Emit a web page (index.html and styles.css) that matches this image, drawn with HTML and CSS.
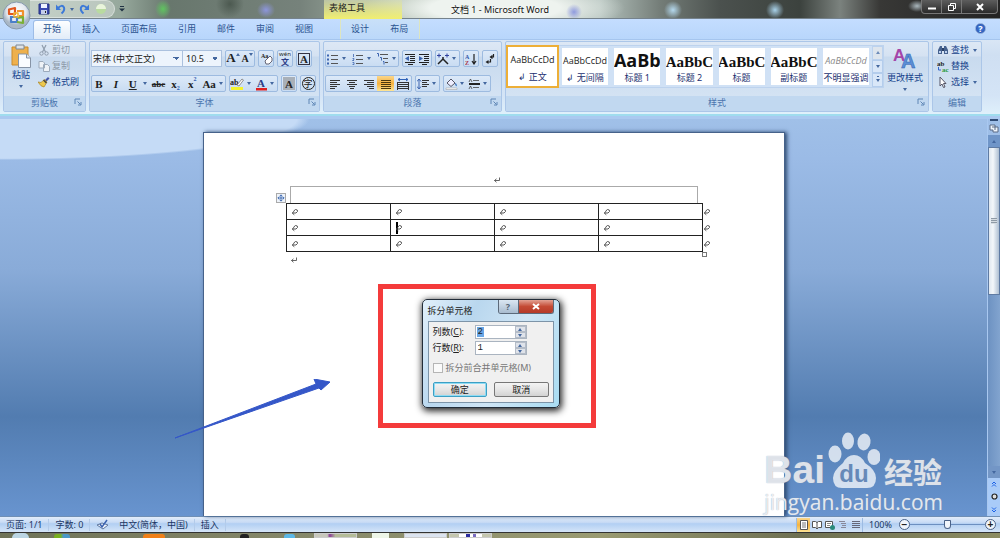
FILE: index.html
```html
<!DOCTYPE html>
<html lang="zh-CN">
<head>
<meta charset="utf-8">
<title>文档 1 - Microsoft Word</title>
<link rel="stylesheet" href="styles.css">
</head>
<body>
<svg class="sprite" aria-hidden="true">
  <symbol id="cellmark" viewBox="0 0 8 8"><path d="M2.500 3.200 4.500 1.500q2.500 0 2 2L5 5H1.500M3.300 3.200 1.200 5l2.100 1.800" fill="none" stroke="#444" stroke-width=".9"/></symbol>
  <symbol id="paramark" viewBox="0 0 8 8"><path d="M6.500 1.500V4.500H1.500M3.500 2.800 1.500 4.500l2 1.800" fill="none" stroke="#555" stroke-width=".9"/></symbol>
  <symbol id="launch" viewBox="0 0 8 8"><path d="M1 6V1h5M3.500 3.500l3 3M7 4v3H4" fill="none" stroke="#5f86b5"/></symbol>
  <symbol id="lines" viewBox="0 0 12 12"><path d="M1 2.500h10M1 4.500h7M1 6.500h10M1 8.500h7M1 10.500h5" stroke="#333"/></symbol>
</svg>

<header class="titlebar">
  <div class="quick">
    <button aria-label="保存"><svg width="12" height="12" viewBox="0 0 12 12"><path d="M1 1h10v10H1z" fill="#3a49b0" stroke="#22307f"/><path d="M3 1h6v4H3z" fill="#eef3ff"/><path d="M3 7h6v4H3z" fill="#c4cdea"/><path d="M7 8h1v2H7z" fill="#222"/></svg></button>
    <button aria-label="撤消"><svg width="12" height="12" viewBox="0 0 12 12"><path d="M3 5q4-4 6-.500 1 3-2.500 6" fill="none" stroke="#3c79d8" stroke-width="2"/><path d="M1 1.500V7h5z" fill="#3c79d8"/></svg></button>
    <i class="arr"></i>
    <button aria-label="恢复"><svg width="12" height="12" viewBox="0 0 12 12"><path d="M9 5Q5 1 3 4.500q-1 3 2.500 6" fill="none" stroke="#3c79d8" stroke-width="2"/><path d="M11 1.500V7H6z" fill="#3c79d8"/></svg></button>
    <button aria-label="主题"><svg width="12" height="12" viewBox="0 0 12 12"><circle cx="6" cy="6" r="5" fill="#b9dba0"/><path d="M1 6a5 5 0 0 1 10 0z" fill="#e9f4dc"/></svg></button>
  </div>
  <button class="more" aria-label="自定义快速访问工具栏"><svg width="6" height="6" viewBox="0 0 6 6"><path d="M1 .500h4" stroke="#234"/><path d="M0 2.500h6L3 5.500z" fill="#234"/></svg></button>
  <div class="context-title">表格工具</div>
  <h1 class="title">文档 1 - Microsoft Word</h1>
  <div class="winbuttons">
    <button aria-label="最小化"><svg width="10" height="10" viewBox="0 0 10 10"><path d="M1 6.500h8" stroke="#fff" stroke-width="2"/></svg></button>
    <button aria-label="还原"><svg width="10" height="10" viewBox="0 0 10 10"><path d="M3.500 3V1.500h5v5H7M1.500 3.500h5v5h-5z" fill="none" stroke="#fff"/></svg></button>
    <button class="close" aria-label="关闭"><svg width="10" height="10" viewBox="0 0 10 10"><path d="m2 2 6 6M8 2 2 8" stroke="#fff" stroke-width="2"/></svg></button>
  </div>
</header>

<button class="orb" aria-label="Office 按钮"><svg width="29" height="29" viewBox="0 0 29 29"><defs><radialGradient id="og" cx=".5" cy=".35"><stop offset="0" stop-color="#fff"/><stop offset=".7" stop-color="#e4e9ef"/><stop offset="1" stop-color="#a9b7c6"/></radialGradient></defs><circle cx="14.500" cy="14.500" r="13.500" fill="url(#og)" stroke="#8799ad"/><g fill="none" stroke-width="2.200" stroke-linejoin="round"><path d="M7 8.500 13 7v6H7z" stroke="#e0571e"/><path d="M15 10h6v5h-4" stroke="#f0912e"/><path d="M9 15v6h6v-5H9" stroke="#4a7fc9"/><path d="m16 17 5-1v6l-6-1" stroke="#7ab034"/><path d="M12 12h4v4h-4z" stroke="#efb52e" stroke-width="1.500"/></g></svg></button>

<nav class="tabs">
  <a class="tab on" href="#home">开始</a><a class="tab" href="#insert">插入</a><a class="tab" href="#layout">页面布局</a><a class="tab" href="#ref">引用</a><a class="tab" href="#mail">邮件</a><a class="tab" href="#review">审阅</a><a class="tab" href="#view">视图</a>
  <div class="context"><a class="tab" href="#design">设计</a><a class="tab" href="#tlayout">布局</a></div>
  <button class="help" aria-label="帮助">?</button>
</nav>

<section class="ribbon">
  <div class="group clip">
    <div class="body">
      <button class="big"><svg width="22" height="24" viewBox="0 0 22 24"><path d="M2 3h16v18H2z" fill="#eeb04c" stroke="#c98a2c"/><path d="M6 1h8v4H6z" fill="#dfe3e8" stroke="#7c8793"/><path d="M8.500 10h8l4 4v9.500h-12z" fill="#fafcff" stroke="#8794a6"/><path d="M16.500 10v4h4" fill="#dde6f2" stroke="#8794a6"/></svg><span>粘贴</span><i class="arr"></i></button>
      <div class="stack">
        <button class="row off"><svg width="12" height="12" viewBox="0 0 12 12"><path d="m4 1 3.500 7M8 1 4.500 8" stroke="#8f9cad" stroke-width="1.200"/><circle cx="3.500" cy="9.500" r="1.700" fill="none" stroke="#8f9cad"/><circle cx="8.500" cy="9.500" r="1.700" fill="none" stroke="#8f9cad"/></svg>剪切</button>
        <button class="row off"><svg width="12" height="12" viewBox="0 0 12 12"><path d="M1 1.500h4l1.500 1.500v5H1zM5.500 4.500h4l2 2v5h-6z" fill="#eef2f7" stroke="#9caabb"/></svg>复制</button>
        <button class="row"><svg width="12" height="12" viewBox="0 0 12 12"><path d="m7 4 3-3 1.500 1.500-3 3z" fill="#4656a8"/><path d="m0 6 3 .500L6.500 3.500 9 6 6 11q-3 0-6-5z" fill="#edc84c" stroke="#a98526" stroke-width=".7"/><path d="m5.500 4 3 3" stroke="#444" stroke-width="1.500"/></svg>格式刷</button>
      </div>
    </div>
    <h2>剪贴板<button class="launch" aria-label="剪贴板选项"><svg width="8" height="8"><use href="#launch"/></svg></button></h2>
  </div>

  <div class="group font">
    <div class="body rows">
      <div class="line">
        <div class="combos"><select class="combo face" aria-label="字体"><option>宋体 (中文正文)</option></select><select class="combo size" aria-label="字号"><option>10.5</option></select></div>
        <div class="set"><button class="serif grow" aria-label="增大字体">A<i class="arr up"></i></button><button class="serif small" aria-label="缩小字体">A<i class="arr"></i></button></div>
        <div class="set"><button aria-label="清除格式"><svg width="13" height="13" viewBox="0 0 13 13"><text x="1" y="6" font-size="6" class="ic">Aa</text><path d="m5 9 5-5 2 2v3l-3 3H6z" fill="#fff" stroke="#667"/></svg></button></div>
        <div class="set"><button class="wen" aria-label="拼音指南"><small>wén</small><b>文</b></button></div>
        <div class="set"><button class="serif boxed" aria-label="字符边框">A</button></div>
      </div>
      <div class="line">
        <div class="set spread">
          <button class="serif">B</button><button class="serif ital">I</button><button class="serif under">U</button><i class="arr"></i><button class="serif strike">abc</button><button class="serif">x<sub>2</sub></button><button class="serif">x<sup>2</sup></button><button class="serif aa">Aa</button><i class="arr"></i>
        </div>
        <div class="set"><button aria-label="突出显示"><svg width="15" height="14" viewBox="0 0 15 14"><text x="0" y="8" font-size="8" class="ic">ab</text><path d="m7 8 5-6 1.500 1-4.500 6z" fill="#fff" stroke="#777" stroke-width=".8"/><path d="M1 10h12v3H1z" fill="#f4f32c"/></svg></button><i class="arr"></i><button aria-label="字体颜色"><svg width="13" height="14" viewBox="0 0 13 14"><text x="2" y="10" font-size="11" class="ic navy">A</text><path d="M1 11h11v2.500H1z" fill="#e02020"/></svg></button><i class="arr"></i></div>
        <div class="set"><button class="serif shaded" aria-label="字符底纹">A</button></div>
        <div class="set"><button class="ring" aria-label="带圈字符"><span>字</span></button></div>
      </div>
    </div>
    <h2>字体<button class="launch" aria-label="字体选项"><svg width="8" height="8"><use href="#launch"/></svg></button></h2>
  </div>

  <div class="group para">
    <div class="body rows">
      <div class="line">
        <div class="set spread first"><button aria-label="项目符号"><svg width="12" height="12" viewBox="0 0 12 12"><path d="M4 2.500h7M4 6.500h7M4 10.500h7" stroke="#555"/><path d="M0 1.500h2v2H0zM0 5.500h2v2H0zM0 9.500h2v2H0z" fill="#3d65b0"/></svg></button><i class="arr"></i><button aria-label="编号"><svg width="12" height="12" viewBox="0 0 12 12"><path d="M4 2.500h7M4 6.500h7M4 10.500h7" stroke="#555"/><path d="M1.500 1v3M.500 5.500h1.500v1L.500 7.500H2M.500 9.500H2v2H.500" fill="none" stroke="#3d65b0" stroke-width=".8"/></svg></button><i class="arr"></i><button aria-label="多级列表"><svg width="12" height="12" viewBox="0 0 12 12"><path d="M3 1.500h8M6 5.500h5M8 9.500h3" stroke="#555"/><path d="M0 .500h1.500v3M3 4.500h1.500v3M6 8.500h1v3" fill="none" stroke="#3d65b0"/></svg></button><i class="arr"></i></div>
        <div class="set"><button aria-label="减少缩进"><svg width="12" height="12" viewBox="0 0 12 12"><path d="M1 1.500h10M6 3.500h5M6 5.500h5M6 7.500h5M1 9.500h10M4 11.500h5" stroke="#222"/><path d="M5 3v5L1 5.500z" fill="#3d65b0"/></svg></button><button aria-label="增加缩进"><svg width="12" height="12" viewBox="0 0 12 12"><path d="M1 1.500h10M6 3.500h5M6 5.500h5M6 7.500h5M1 9.500h10M4 11.500h5" stroke="#222"/><path d="M1 3v5l4-2.500z" fill="#3d65b0"/></svg></button></div>
        <div class="set"><button aria-label="中文版式"><svg width="12" height="12" viewBox="0 0 12 12"><path d="M6 4v2L1 11M6 6l5 5" stroke="#222" stroke-width="1.500" fill="none"/><path d="M0 2.500h4M2 .500v4M8 2.500h4M10 .500v4" stroke="#3042a0"/></svg></button><i class="arr"></i></div>
        <div class="set"><button aria-label="排序"><svg width="12" height="12" viewBox="0 0 12 12"><text x="0" y="6" font-size="6" class="ic blue">A</text><text x="0" y="12" font-size="6" class="ic red">Z</text><path d="M9 1v9M7 8l2 3 2-3" stroke="#222" fill="none" stroke-width="1.200"/></svg></button></div>
        <div class="set"><button aria-label="显示编辑标记"><svg width="12" height="12" viewBox="0 0 12 12"><path d="M9.500 1v3H6.500M8.500 2.500 6.500 4l2 1.500M6.500 6v3H4" fill="none" stroke="#222" stroke-width="1.200"/><path d="M1.500 9 4.500 7v4z" fill="#222"/></svg></button></div>
      </div>
      <div class="line">
        <div class="set"><button aria-label="左对齐"><svg width="12" height="12"><use href="#lines"/></svg></button><button aria-label="居中"><svg width="12" height="12" viewBox="0 0 12 12"><path d="M1 2.500h10M3 4.500h6M1 6.500h10M3 8.500h6M4 10.500h4" stroke="#333"/></svg></button><button aria-label="右对齐"><svg width="12" height="12" viewBox="0 0 12 12"><path d="M1 2.500h10M4 4.500h7M1 6.500h10M4 8.500h7M6 10.500h5" stroke="#333"/></svg></button><button class="lit" aria-label="两端对齐"><svg width="12" height="12" viewBox="0 0 12 12"><path d="M1 2.500h10M1 4.500h10M1 6.500h10M1 8.500h10M1 10.500h10" stroke="#4c3a10"/></svg></button><button aria-label="分散对齐"><svg width="12" height="12" viewBox="0 0 12 12"><path d="M1 4.500h10M1 6.500h10M1 8.500h10M1 10.500h10M.500 4v8M11.500 4v8" stroke="#333"/><path d="M1 1.500h10M3 0 1 1.500 3 3M9 0l2 1.500L9 3" stroke="#2f62b8" fill="none"/></svg></button></div>
        <div class="set"><button aria-label="行距"><svg width="12" height="12" viewBox="0 0 12 12"><path d="M5 2.500h7M5 4.500h5M5 6.500h7M5 8.500h5" stroke="#333"/><path d="M2 1v10M0 3.500 2 1l2 2.500M0 8.500 2 11l2-2.500" stroke="#3d65b0" fill="none"/></svg></button><i class="arr"></i></div>
        <div class="set"><button aria-label="底纹"><svg width="13" height="13" viewBox="0 0 13 13"><path d="m2 6 4-4 4 4-4 3.500z" fill="#eef" stroke="#556"/><path d="M10 6q2.500 1 1.500 3.500Q10 9 10 6z" fill="#2d6cc0"/><path d="M1 11h11v1.500H1z" fill="#fff" stroke="#999" stroke-width=".5"/></svg></button><i class="arr"></i><button aria-label="边框"><svg width="12" height="12" viewBox="0 0 12 12"><path d="M1 6h11" stroke="#222" stroke-width="2"/><path d="M5 2.500h6M5 9.500h6M1 4l1.500-3L4 4M1 11l1.500-3L4 11" stroke="#444" fill="none" stroke-width=".8"/></svg></button><i class="arr"></i></div>
      </div>
    </div>
    <h2>段落<button class="launch" aria-label="段落选项"><svg width="8" height="8"><use href="#launch"/></svg></button></h2>
  </div>

  <div class="group styles">
    <div class="body">
      <div class="gallery">
        <button class="tile on"><span class="sample">AaBbCcDd</span><span>↲ 正文</span></button>
        <button class="tile"><span class="sample">AaBbCcDd</span><span>↲ 无间隔</span></button>
        <button class="tile"><span class="sample h1">AaBb</span><span>标题 1</span></button>
        <button class="tile"><span class="sample h2">AaBbC</span><span>标题 2</span></button>
        <button class="tile"><span class="sample h2">AaBbC</span><span>标题</span></button>
        <button class="tile"><span class="sample h2">AaBbC</span><span>副标题</span></button>
        <button class="tile"><span class="sample faint">AaBbCcDd</span><span>不明显强调</span></button>
        <div class="scroll"><button class="dim" aria-label="上一行"><i class="arr up"></i></button><button aria-label="下一行"><i class="arr"></i></button><button aria-label="其他"><i class="arr bar"></i></button></div>
      </div>
      <button class="big change"><svg width="24" height="24" viewBox="0 0 24 24"><text x="0" y="14" font-size="17" class="pa">A</text><text x="8" y="21" font-size="20" class="ba">A</text></svg><span>更改样式</span><i class="arr"></i></button>
    </div>
    <h2>样式<button class="launch" aria-label="样式选项"><svg width="8" height="8"><use href="#launch"/></svg></button></h2>
  </div>

  <div class="group edit">
    <div class="body">
      <div class="stack">
        <button class="row"><svg width="12" height="12" viewBox="0 0 12 12"><path d="M1 10V6l2-4h2v8zM7 10V2h2l2 4v4z" fill="#46628f"/><path d="M5 4h2v3H5z" fill="#2a3f66"/><path d="M2 7h2v2H2zM8 7h2v2H8z" fill="#bcd0ee"/></svg>查找<i class="arr"></i></button>
        <button class="row"><svg width="12" height="12" viewBox="0 0 12 12"><text x="0" y="6" font-size="7" class="ic">ab</text><text x="5" y="12" font-size="7" class="ic green">ac</text><path d="M1.500 7v3H4" stroke="#36c" fill="none"/></svg>替换</button>
        <button class="row"><svg width="12" height="12" viewBox="0 0 12 12"><path d="M3 1v9l2-2 1.500 3.500L8 11 6.500 7.500H9z" fill="#fff" stroke="#556"/></svg>选择<i class="arr"></i></button>
      </div>
    </div>
    <h2>编辑</h2>
  </div>
</section>

<main class="work">
  <div class="desk">
    <article class="paper">
      <svg class="topmark" width="8" height="8"><use href="#paramark"/></svg>
      <div class="headbox"></div>
      <div class="tablewrap">
        <span class="handle"><svg width="9" height="9" viewBox="0 0 9 9"><path d="M4.500 1v7M1 4.500h7M3 2.500 4.500 1 6 2.500M3 6.500 4.500 8 6 6.500M2.500 3 1 4.500 2.500 6M6.500 3 8 4.500 6.500 6" stroke="#2c5aa8" fill="none" stroke-width=".9"/></svg></span>
        <table class="grid">
          <tr><td><svg><use href="#cellmark"/></svg></td><td><svg><use href="#cellmark"/></svg></td><td><svg><use href="#cellmark"/></svg></td><td><svg><use href="#cellmark"/></svg></td><td class="end"><svg><use href="#cellmark"/></svg></td></tr>
          <tr><td><svg><use href="#cellmark"/></svg></td><td class="caret"><svg><use href="#cellmark"/></svg></td><td><svg><use href="#cellmark"/></svg></td><td><svg><use href="#cellmark"/></svg></td><td class="end"><svg><use href="#cellmark"/></svg></td></tr>
          <tr><td><svg><use href="#cellmark"/></svg></td><td><svg><use href="#cellmark"/></svg></td><td><svg><use href="#cellmark"/></svg></td><td><svg><use href="#cellmark"/></svg></td><td class="end"><svg><use href="#cellmark"/></svg></td></tr>
        </table>
        <span class="resize"></span>
      </div>
      <svg class="aftermark" width="8" height="8"><use href="#paramark"/></svg>

      <svg class="pointer" width="160" height="62" viewBox="0 0 160 62"><path d="M1 59 142 5l-2-5 16 3-9 8-2-2Z" fill="#3557c8" stroke="#3557c8"/></svg>

      <div class="frame">
        <form class="dialog">
          <div class="dtitle"><span>拆分单元格</span><div class="dbtns"><button type="button" aria-label="帮助">?</button><button type="button" class="x" aria-label="关闭"><svg width="8" height="7" viewBox="0 0 8 7"><path d="m1 1 6 5M7 1 1 6" stroke="#fff" stroke-width="2"/></svg></button></div></div>
          <div class="dbody">
            <div class="field"><label for="cols">列数(<u>C</u>):</label><div class="spin"><span class="val"><input id="cols" type="text" value="2"></span><div class="ud"><button type="button" aria-label="增加列"><i class="arr up"></i></button><button type="button" aria-label="减少列"><i class="arr"></i></button></div></div></div>
            <div class="field"><label for="rws">行数(<u>R</u>):</label><div class="spin"><span class="val plain"><input id="rws" type="text" value="1"></span><div class="ud"><button type="button" aria-label="增加行"><i class="arr up"></i></button><button type="button" aria-label="减少行"><i class="arr"></i></button></div></div></div>
            <label class="merge"><input type="checkbox" disabled><span>拆分前合并单元格(M)</span></label>
            <div class="actions"><button type="button" class="ok">确定</button><button type="button">取消</button></div>
          </div>
        </form>
      </div>
    </article>
    <div class="mark">
      <div class="brand"><b>Bai</b><span class="paw"><svg width="52" height="56" viewBox="0 0 52 56"><ellipse cx="7" cy="22" rx="6.500" ry="8.500"/><ellipse cx="20" cy="9" rx="6" ry="8.500"/><ellipse cx="36" cy="10" rx="6.500" ry="8.500" transform="rotate(10 36 10)"/><ellipse cx="46" cy="25" rx="6.500" ry="8"/><path d="M26 23q7 0 11 8 11 7 11 15 0 10-9 10H14Q5 56 5 46q0-7 10-15 4-8 11-8z"/></svg><em>du</em></span><b class="cn">经验</b></div>
      <div class="site">jingyan.baidu.com</div>
    </div>
  </div>
  <aside class="vbar">
    <span class="split"></span>
    <button class="ruler" aria-label="标尺"><svg width="10" height="10" viewBox="0 0 10 10"><path d="M1 2h5v2h3v5H4V7H1z" fill="#eef4fb" stroke="#5a6b85"/><path d="M3 4h3v3" fill="none" stroke="#5a6b85"/></svg></button>
    <button class="step" aria-label="向上滚动"><i class="arr up"></i></button>
    <div class="track"><div class="thumb"><i></i></div></div>
    <button class="step low" aria-label="向下滚动"><i class="arr"></i></button>
    <div class="browse">
      <button aria-label="前一页"><svg width="6" height="6" viewBox="0 0 6 6"><path d="m1 3 2-2 2 2M1 5.500l2-2 2 2" stroke="#1d62e6" fill="none"/></svg></button>
      <button aria-label="选择浏览对象"><svg width="7" height="7" viewBox="0 0 7 7"><circle cx="3.500" cy="3.500" r="2.500" fill="#ddd" stroke="#222" stroke-width="1.200"/></svg></button>
      <button aria-label="下一页"><svg width="6" height="6" viewBox="0 0 6 6"><path d="m1 .500 2 2 2-2M1 3l2 2 2-2" stroke="#1d62e6" fill="none"/></svg></button>
    </div>
  </aside>
</main>

<footer class="status">
  <span class="cell">页面: 1/1</span><span class="cell">字数: 0</span>
  <span class="cell check"><svg width="13" height="12" viewBox="0 0 13 12"><path d="m1 6 5-2 6 2-5 4z" fill="#eef3fb" stroke="#6078a0"/><path d="m4 5 2 3 5-7" fill="none" stroke="#3c63b0" stroke-width="1.500"/></svg></span>
  <span class="cell">中文(简体，中国)</span><span class="cell">插入</span>
  <div class="right">
    <div class="views">
      <button class="lit" aria-label="页面视图"><svg width="10" height="10" viewBox="0 0 10 10"><path d="M1.500.500h7v9h-7z" fill="#fff" stroke="#555"/><path d="M3 3h4M3 5h4M3 7h4" stroke="#777"/></svg></button>
      <button aria-label="阅读版式"><svg width="10" height="10" viewBox="0 0 10 10"><path d="M.500 1.500h3l1.500 1 1.500-1h3v6h-3L5 9 3.500 7.500h-3zM5 2v7" fill="#fff" stroke="#555"/></svg></button>
      <button aria-label="Web 版式"><svg width="10" height="10" viewBox="0 0 10 10"><path d="M.500 1.500h7v6h-7z" fill="#fff" stroke="#555"/><path d="M2 3.500h4M2 5.500h3" stroke="#888"/><circle cx="7.500" cy="7.500" r="2.500" fill="#2a8a7c"/></svg></button>
      <button aria-label="大纲视图"><svg width="10" height="10" viewBox="0 0 10 10"><path d="M1 1.500h6M3 3.500h5M4 5.500h4M3 7.500h5" stroke="#889"/></svg></button>
      <button aria-label="普通视图"><svg width="10" height="10" viewBox="0 0 10 10"><path d="M1 1.500h8M1 3.500h8M1 5.500h8M1 7.500h8" stroke="#667"/></svg></button>
    </div>
    <span class="pct">100%</span>
    <button class="zb" aria-label="缩小">−</button><input class="zoom" type="range" min="0" max="100" value="50" aria-label="显示比例"><button class="zb" aria-label="放大">+</button>
  </div>
</footer>
<div class="taskbar"><span class="start"></span><span class="pin a"></span><span class="pin b"></span><span class="pin c"></span><span class="pin d"></span><span class="win"></span><span class="win clear"></span><span class="win pale"></span><span class="win last"></span></div>
</body>
</html>
```

FILE: styles.css
```css
* { box-sizing: border-box; }
body {
  margin: 0; min-height: 100vh; display: flex; flex-direction: column; position: relative;
  font: 9px/12px "Noto Sans", "Noto Sans CJK SC", sans-serif; color: #15428b; background: #bfdbff; overflow: hidden;
}
button, select, input { font: inherit; color: inherit; margin: 0; padding: 0; border: 0; background: none; }
button { display: inline-flex; align-items: center; justify-content: center; white-space: nowrap; }
h1, h2 { margin: 0; font: inherit; }
svg { display: block; flex: none; }
.sprite { position: absolute; width: 0; height: 0; }
.arr { flex: none; width: 0; height: 0; border: 2px solid transparent; border-top: 3px solid #4468a0; border-bottom: 0; margin: 0 2px; }
.arr.up { border-top: 0; border-bottom: 3px solid #4468a0; }
.ic { font-family: "Liberation Serif", serif; font-weight: bold; fill: #222; }
.ic.blue { fill: #2f55a8; }
.ic.navy { fill: #2b3c86; }
.ic.red { fill: #a83244; }
.ic.green { fill: #2c9a3c; }

.titlebar {
  height: 19px; display: flex; align-items: flex-start; position: relative; padding-left: 30px;
  background:
    radial-gradient(ellipse 8px 9px at 163px 9px, #5fc45f, transparent),
    radial-gradient(ellipse 9px 8px at 266px 10px, #8d96dc, transparent),
    radial-gradient(ellipse 14px 14px at 230px 4px, #4c5950, transparent),
    radial-gradient(ellipse 8px 8px at 574px 12px, #8f9ade, transparent),
    radial-gradient(ellipse 9px 9px at 673px 10px, #b5d9ee, transparent),
    radial-gradient(ellipse 9px 9px at 775px 10px, #a9d2ea, transparent),
    radial-gradient(ellipse 9px 6px at 917px 6px, #aab7bd, transparent),
    radial-gradient(ellipse 130px 26px at 495px 8px, #eef3ef 50%, transparent),
    linear-gradient(90deg, #a9bcae 0, #97a99d 12%, #68776d 17%, #76827b 30%, #aebcae 40%, #b4c2bd 60%, #747d78 66%, #4b514e 72%, #3c423e 80%, #7b827e 84%, #383836 88%, #232323 100%);
  border-bottom: 1px solid #75828c;
}
.quick { display: flex; align-items: center; gap: 2px; height: 18px; padding: 0 6px; background: #ffffff55; border: 1px solid #ffffff66; border-left: 0; border-radius: 0 9px 9px 0; }
.quick button { width: 15px; }
.quick .arr { margin: 0; }
.more { width: 14px; height: 18px; }
.context-title { position: absolute; left: 324px; top: 0; width: 78px; height: 19px; padding: 2px 5px; color: #222; background: linear-gradient(#d6ddb4aa, #f1ef70); }
.title { position: absolute; left: 0; right: 0; top: 4px; text-align: center; color: #111; text-shadow: 0 0 3px #fff; }
.winbuttons { margin-left: auto; margin-right: 2px; display: flex; height: 14px; border: 1px solid #777; border-top: 0; border-radius: 0 0 4px 4px; background: linear-gradient(#5d5d5d, #2b2b2b); }
.winbuttons button { width: 20px; border-right: 1px solid #777; }
.winbuttons .close { width: 35px; border-right: 0; }
.orb { position: absolute; left: 2px; top: 1px; z-index: 2; }

.tabs { display: flex; height: 20px; padding-left: 33px; background: linear-gradient(#c4ddff, #b8d6fb); position: relative; align-items: flex-end; }
.tab { height: 19px; padding: 3px 10px; margin-right: 1px; border-radius: 3px 3px 0 0; color: #2a528f; text-decoration: none; white-space: nowrap; }
.tab.on { background: linear-gradient(#fdfeff, #e1ecf8); border: 1px solid #9dbce6; border-bottom: 0; padding: 2px 9px; }
.context { display: flex; height: 20px; align-items: flex-end; margin-left: 16px; border: 1px solid #dde5c0; border-width: 0 1px; background: linear-gradient(#c9e0f8, #bbd8fa); }
.help { position: absolute; right: 14px; top: 4px; width: 11px; height: 11px; border-radius: 50%; background: radial-gradient(#4f86e0, #1b48a8); border: 1px solid #8aa7d6; color: #fff; font-weight: bold; }

.ribbon { display: flex; gap: 3px; height: 77px; padding: 1px 18px 2px 3px; background: linear-gradient(#d9e6f5, #cfdff2 20%, #d4e4f6 75%, #dff0fb); border-top: 1px solid #a5c5ee; border-bottom: 2px solid #9fdcee; }
.group { display: flex; flex-direction: column; border: 1px solid #abc6e8; border-radius: 2px; background: linear-gradient(#dde8f5 0, #d5e2f2 20%, #c8daee 22%, #d8e6f5 100%); }
.group h2 { height: 15px; text-align: center; background: #c1d8f0; color: #4a74ad; position: relative; line-height: 14px; }
.launch { position: absolute; right: 3px; top: 2px; }
.body { flex: 1; display: flex; min-height: 0; }
.clip { width: 83px; }
.font { width: 231px; }
.para { width: 179px; }
.styles { flex: 1; min-width: 0; }
.edit { width: 50px; }
.big { flex-direction: column; justify-content: flex-start; width: 34px; padding-top: 2px; gap: 1px; }
.big .arr { margin-top: 3px; }
.stack { display: flex; flex-direction: column; gap: 4px; padding-top: 2px; align-items: flex-start; }
.row { gap: 2px; height: 12px; }
.off { color: #8d99a8; }
.rows { flex-direction: column; gap: 8px; padding: 8px 1px 0 1px; }
.line { display: flex; gap: 3px; height: 17px; }
.set { display: flex; align-items: center; border: 1px solid #9dbbe0; border-radius: 2px; background: linear-gradient(#dce9f8, #c9dcf2); }
.set button { height: 15px; min-width: 14px; }
.set .arr { margin: 0 3px 0 2px; }
.combos { display: flex; }
.combo {
  appearance: none; height: 17px; border: 1px solid #abc1de; color: #222; padding-left: 1px;
  background:
    linear-gradient(to top right, transparent 50%, #4468a0 50%) no-repeat right 6px center / 3px 3px,
    linear-gradient(to top left, transparent 50%, #4468a0 50%) no-repeat right 3px center / 3px 3px,
    #edf4fc;
}
.face { width: 92px; }
.size { width: 39px; border-left: 0; padding-left: 3px; }
.serif { font: bold 11px/14px "Liberation Serif", serif; color: #222; }
.serif sup, .serif sub { font-size: 6px; line-height: 6px; color: #2c5ab0; }
.serif sup { align-self: flex-start; }
.serif sub { align-self: flex-end; }
.grow, .small { align-items: flex-start; }
.serif.grow { font-size: 13px; }
.serif.small { font-size: 10px; line-height: 16px; }
.set .grow .arr, .set .small .arr { margin: 2px 0 0; }
.ital { font-style: italic; }
.under { text-decoration: underline; }
.strike { font-size: 9px; text-decoration: line-through; }
.spread { width: 135px; justify-content: space-between; }
.spread.first { width: 74px; }
.spread .arr { margin: 0 2px 0 0; }
.wen { flex-direction: column; color: #2b3c86; }
.wen small { font-size: 6px; line-height: 6px; color: #222; }
.wen b { font-size: 8px; line-height: 9px; }
.set .boxed { height: 12px; min-width: 12px; margin: 0 1px; border: 1px solid #334; }
.set .shaded { height: 13px; min-width: 12px; margin: 0 1px; background: #a9b0b8; }
.ring span { width: 13px; height: 13px; line-height: 11px; border: 1px solid #222; border-radius: 50%; color: #222; }
.lit { background: linear-gradient(#fbd68a, #f5b23f 50%, #fde596); }
.set .lit { min-width: 18px; }
.para .line:last-child .set:first-child button { min-width: 17px; }

.styles .body { padding: 3px 4px 0 0; gap: 2px; }
.gallery { display: flex; flex: 1; min-width: 0; height: 43px; background: #d0e1f5; border: 1px solid #bdd3ee; border-left: 0; }
.tile { flex: 1; min-width: 0; margin: 2px 3px; flex-direction: column; background: #fff; color: #22306f; overflow: hidden; justify-content: flex-end; height: 37px; padding-bottom: 1px; }
.tile.on { flex: 0 0 53px; margin: -1px 0; height: 43px; border: 2px solid #edaf38; padding-bottom: 3px; }
.sample { font: 9px/22px "Open Sans", sans-serif; color: #222; height: 22px; }
.sample.h1 { font: bold 18px/20px "Open Sans", sans-serif; color: #111; }
.sample.h2 { font: bold 15px/24px "Liberation Serif", serif; color: #111; }
.sample.faint { font-style: italic; color: #888; }
.scroll { display: flex; flex-direction: column; width: 11px; }
.scroll button { flex: 1; border: 1px solid #b4cdec; background: #d9e7f8; }
.scroll .dim { background: #e4e7ea; opacity: .7; }
.arr.bar { box-shadow: 0 -4px 0 -1px #4468a0; }
.change { width: 38px; }
.pa { font-family: "Liberation Sans", sans-serif; font-weight: bold; fill: #a445a8; }
.ba { font-family: "Liberation Sans", sans-serif; font-weight: bold; fill: #5b8fd6; stroke: #2f5fae; stroke-width: .5; }
.edit .stack { padding-left: 4px; }

.work { flex: 1; display: flex; min-height: 0; border-top: 3px solid #aac9f0; background: linear-gradient(#a0c0e8 0, #9bbbe6 10%, #89abd8 38%, #527cb0 75%, #6894cf 100%); }
.desk { flex: 1; position: relative; padding-top: 13px; display: flex; justify-content: center; background: radial-gradient(ellipse 430px 57px at 0 0, #c5dbf6 69%, #c5dbf600 72%); }
.paper { position: relative; width: 582px; background: #fff; border: 1px solid #46628a; border-bottom: 0; box-shadow: 2px 0 4px #2e4a70; padding: 43px 0 0 82px; }
.topmark { margin-left: 207px; }
.headbox { width: 408px; height: 18px; margin: 2px 0 0 4px; border: 1px solid #aaa; border-bottom: 0; }
.tablewrap { position: relative; width: 434px; margin-top: -1px; }
.grid { width: 434px; border-collapse: collapse; table-layout: fixed; }
.grid td { height: 16px; width: 104px; padding: 0 0 0 4px; border: 1px solid #222; }
.grid svg { width: 8px; height: 8px; }
.grid .end { border: 0; width: 17px; padding-left: 0; }
.grid .caret { background: linear-gradient(#000, #000) no-repeat 5px center / 2px 12px; }
.handle { position: absolute; left: -10px; top: -10px; width: 10px; height: 10px; border: 1px solid #aaa; background: #eef3fa; }
.handle svg { width: 8px; height: 8px; }
.resize { position: absolute; left: 416px; bottom: -5px; width: 5px; height: 5px; border: 1px solid #777; background: #fff; }
.aftermark { margin: 4px 0 0 4px; }
.pointer { position: absolute; left: -30px; top: 246px; }

.frame { position: absolute; left: 174px; top: 151px; width: 218px; border: 5px solid #f43b3b; padding: 10px 31px 15px 39px; }
.dialog { border: 1px solid #222c38; border-radius: 5px; background: linear-gradient(115deg, #e2f0fb, #b9d7ee 30%, #cfe5f5 60%, #a9dcf2); box-shadow: 1px 2px 7px 1px #222; padding: 0 5px 4px; color: #222; }
.dtitle { display: flex; height: 21px; align-items: flex-start; white-space: nowrap; }
.dtitle span { flex: 1; padding-top: 5px; }
.dbtns { display: flex; height: 14px; border: 1px solid #5c6a7a; border-top: 0; border-radius: 0 0 3px 3px; overflow: hidden; }
.dbtns button { width: 19px; background: linear-gradient(#dbe7f2, #a9bccf); font-weight: bold; color: #567; }
.dbtns .x { width: 35px; background: linear-gradient(#e3a294, #c44a34 50%, #b53a28); border-left: 1px solid #5c6a7a; }
.dbody { background: #f0f0f0; border: 1px solid #7d94a8; padding: 3px 4px 5px; display: flex; flex-direction: column; gap: 2px; }
.field { display: flex; height: 14px; align-items: center; }
.field label { width: 42px; white-space: nowrap; }
.spin { display: flex; width: 52px; height: 14px; border: 1px solid #aab4c0; background: #fff; }
.val { flex: 1; display: flex; padding: 1px 1px; background: linear-gradient(#6aa7e6, #6aa7e6) no-repeat 1px 1px / 7px 10px; }
.val.plain { background: none; }
.val input { width: 100%; height: 10px; padding-left: 1px; font: 9px/10px "Liberation Mono", monospace; }
.ud { display: flex; flex-direction: column; width: 11px; }
.ud button { flex: 1; background: #dfe3ea; border: 1px solid #b5bdc8; }
.merge { display: flex; align-items: center; gap: 3px; height: 14px; margin-top: 4px; color: #777; white-space: nowrap; }
.merge input { appearance: none; width: 10px; height: 10px; border: 1px solid #b5b5b5; background: #fafafa; }
.actions { display: flex; gap: 7px; margin-top: 5px; }
.actions button { flex: 1; height: 15px; border: 1px solid #777; border-radius: 2px; background: linear-gradient(#f4f4f4, #e6e6e6 50%, #d2d2d2); }
.actions .ok { border: 1px solid #3c9fc4; box-shadow: inset 0 0 0 1px #8fdcf4; }

.mark { position: absolute; right: 44px; bottom: 0; color: #ffffffbb; text-shadow: 0 0 1px #8a9bb4; }
.brand { display: flex; align-items: flex-end; height: 56px; font-family: "Liberation Sans", sans-serif; }
.brand b { font-size: 39px; line-height: 36px; }
.brand .cn { font: bold 29px/34px "Noto Sans CJK SC", sans-serif; margin-left: 4px; }
.paw { position: relative; margin-left: 3px; }
.paw svg { fill: #ffffffbb; }
.paw em { position: absolute; left: 0; right: 0; bottom: 2px; text-align: center; font: bold 24px/24px "Liberation Sans", sans-serif; color: #6689b8; text-shadow: none; }
.site { font: 21px/28px "Open Sans", sans-serif; color: #ffffffcc; text-align: center; }

.vbar { width: 13px; display: flex; flex-direction: column; align-items: center; border-left: 1px solid #a9c8f0; background: #9fbfe8; }
.split { width: 8px; height: 2px; background: #2f4b75; }
.ruler { height: 14px; }
.step { width: 100%; height: 12px; background: #6f95c8; }
.track { flex: 1; width: 100%; background: linear-gradient(90deg, #6d92c2, #82a4cf); }
.thumb { height: 148px; background: linear-gradient(90deg, #dfe7ef, #f3f7fa 40%, #aebfd2); border: 1px solid #5f7ba3; display: flex; align-items: center; justify-content: center; }
.thumb i { width: 6px; height: 6px; background: repeating-linear-gradient(#8e9aa6 0 1px, #d5dce2 1px 2px); }
.low { background: #7396c6; }
.browse { height: 38px; width: 100%; display: flex; flex-direction: column; align-items: center; justify-content: space-around; background: #a9cbf8; }

.status { display: flex; height: 16px; align-items: center; border-top: 1px solid #6f8fb5; background: linear-gradient(#e2edfb, #c9dcf5 35%, #b2cff3 45%, #d5e5f8); color: #1b3663; white-space: nowrap; }
.cell { padding: 0 6px; border-right: 1px solid #b3cbea; }
.check { padding-right: 4px; border-right: 0; }
.right { margin-left: auto; display: flex; align-items: center; padding-right: 4px; }
.views { display: flex; height: 14px; border: 1px solid #9dbbe2; border-width: 0 1px; margin-right: 6px; }
.views button { width: 13px; }
.pct { width: 30px; }
.zb { width: 11px; height: 11px; border-radius: 50%; border: 1px solid #4a6288; background: #f1f5fb; font: bold 10px/8px "Liberation Sans", sans-serif; color: #222; }
.zoom { appearance: none; width: 75px; height: 12px; background: linear-gradient(#6c8fc0, #6c8fc0) no-repeat center / 100% 1px; }
.zoom::-webkit-slider-thumb { appearance: none; width: 7px; height: 9px; border: 1px solid #4a6288; border-radius: 1px 1px 4px 4px; background: #f1f5fb; }

.taskbar { display: flex; height: 6px; padding-left: 12px; border-top: 1px solid #333; background: linear-gradient(90deg, #6f7358, #86886a 30%, #9a9b72 60%, #6e7052 80%, #8c8c62); }
.start { width: 17px; height: 5px; border-radius: 8px 8px 0 0; background: #bcd6e4; }
.pin { height: 4px; margin-top: 1px; border-radius: 3px 3px 0 0; }
.pin.a { width: 16px; margin-left: 25px; background: linear-gradient(90deg, #78b020 40%, #4a98c8 60%); }
.pin.b { width: 22px; margin-left: 73px; background: #f08018; }
.pin.c { width: 9px; margin-left: 75px; background: #222; }
.pin.d { width: 11px; margin-left: 35px; margin-right: 19px; background: #5cb8e8; }
.win { width: 43px; height: 5px; margin-right: 2px; border: 1px solid #ccc; background: linear-gradient(90deg, #c8c8bc 30%, #8a3c98 36%, #b4bc98 50%); }
.win.clear { border-color: transparent; background: linear-gradient(90deg, transparent 30%, #eef6e8 30% 70%, transparent 70%); }
.win.pale { background: #dce4f0; }
.win.last { background: linear-gradient(90deg, #c4c6ae 22%, #fff 22% 40%, #2c2ca0 40% 48%, #fff 48% 57%, #7a6cc0 57% 63%, #fff 63% 78%, #c4c6ae 78%); }
```
